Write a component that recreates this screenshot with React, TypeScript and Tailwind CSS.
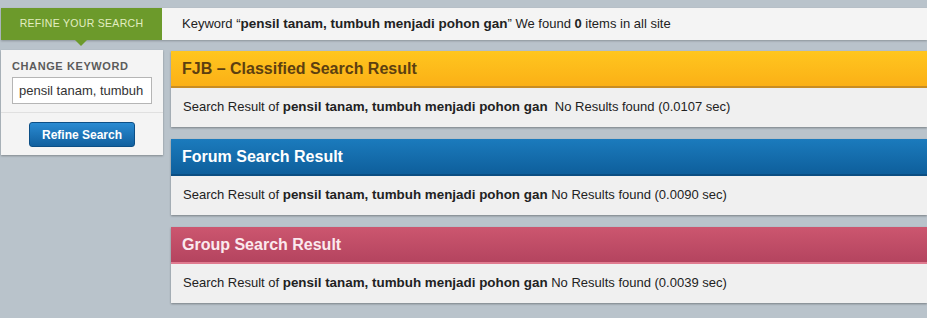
import React from 'react';

const kw = 'pensil tanam, tumbuh menjadi pohon gan';

function ResultPanel({ title, header, titleColor, time, extraSpace }: {
  title: string; header: string; titleColor: string; time: string; extraSpace?: boolean;
}) {
  return (
    <div className="bg-[#f0f0f0] shadow-[0_1px_2px_rgba(0,0,0,0.35)]">
      <div className={`h-[37px] flex items-center px-[11px] text-[16px] font-bold ${header} ${titleColor}`}>
        {title}
      </div>
      <div className="h-[39px] leading-[38px] px-[12px] text-[13px] text-[#222] whitespace-pre">
        {'Search Result of '}<b className="text-[13.4px]">{kw}</b>{extraSpace ? '  ' : ' '}{`No Results found (${time})`}
      </div>
    </div>
  );
}

export default function App() {
  return (
    <div className="w-[927px] h-[318px] bg-[#b9c3cb] pt-[8px] font-[Liberation_Sans,Arial,sans-serif] overflow-hidden">
      {/* Top bar */}
      <div className="flex h-[32px] ml-[1px] bg-[#f4f4f4] shadow-[0_1px_2px_rgba(0,0,0,0.25)]">
        <div className="relative w-[161px] bg-[#6c9a2b] flex items-center justify-center text-[10.5px] tracking-[0.3px] text-[#e2eec0]">
          REFINE YOUR SEARCH
          <div className="absolute left-[74px] -bottom-[6px] w-0 h-0 border-l-[6px] border-r-[6px] border-t-[6px] border-l-transparent border-r-transparent border-t-[#6c9a2b]" />
        </div>
        <div className="pl-[20px] leading-[32px] text-[13px] text-[#222] whitespace-pre">
          {'Keyword “'}<b className="text-[13.5px]">{kw}</b>{'” We found '}<b>0</b>{' items in all site'}
        </div>
      </div>

      <div className="flex gap-[8px] mt-[10px] ml-[1px]">
        {/* Left panel */}
        <div className="w-[162px] h-[105px] bg-[#f4f4f4] shadow-[0_1px_2px_rgba(0,0,0,0.3)] shrink-0">
          <div className="px-[11px] pt-[10px] leading-[13px] text-[11px] font-bold tracking-[0.6px] text-[#5b5b5b]">CHANGE KEYWORD</div>
          <div className="mx-[11px] mt-[4px] h-[27px] border border-[#b5b5b5] bg-white flex items-center px-[6px] text-[13px] text-[#333] overflow-hidden whitespace-nowrap">
            pensil tanam, tumbuh
          </div>
          <div className="mt-[8px] border-t border-[#e0e0e0]" />
          <div className="flex justify-center pt-[9px]">
            <div className="w-[106px] h-[25px] rounded-[3px] bg-gradient-to-b from-[#2a8bd2] to-[#11609f] border border-[#0c4f86] flex items-center justify-center text-[12px] font-bold text-white">
              Refine Search
            </div>
          </div>
        </div>

        {/* Results */}
        <div className="flex-1 flex flex-col gap-[12px] mt-[1px]">
          <ResultPanel
            title="FJB – Classified Search Result"
            header="bg-gradient-to-b from-[#ffc61f] to-[#fbb016] border-b-2 border-[#c98d22]"
            titleColor="text-[#5c3f10]"
            time="0.0107 sec"
            extraSpace
          />
          <ResultPanel
            title="Forum Search Result"
            header="bg-gradient-to-b from-[#1b7bbd] to-[#0e5f9c] border-b-2 border-[#0b4e82]"
            titleColor="text-white"
            time="0.0090 sec"
          />
          <ResultPanel
            title="Group Search Result"
            header="bg-gradient-to-b from-[#cc566f] to-[#b4445f] border-b-2 border-[#e07b90]"
            titleColor="text-[#fbe9ee]"
            time="0.0039 sec"
          />
        </div>
      </div>
    </div>
  );
}
